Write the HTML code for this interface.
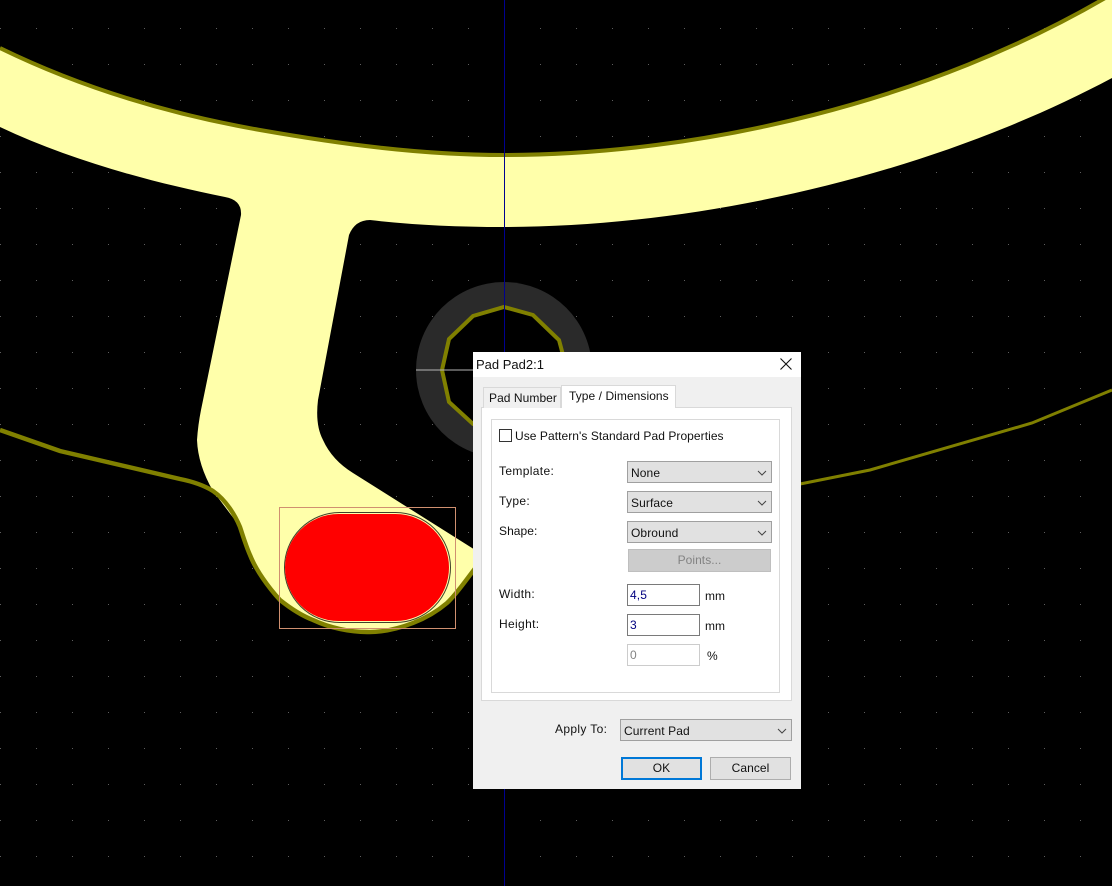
<!DOCTYPE html>
<html><head><meta charset="utf-8"><style>
html,body{margin:0;padding:0;background:#000}
#p{position:relative;width:1112px;height:886px;overflow:hidden;background:#000;font:12px "Liberation Sans",sans-serif;color:#111}
svg.bg{position:absolute;left:0;top:0}
.d{position:absolute;left:473px;top:352px;width:328px;height:437px;background:#f0f0f0}
.a{position:absolute;box-sizing:border-box;white-space:nowrap}
.t{position:absolute;white-space:nowrap;letter-spacing:.06px;line-height:14px}
.l{letter-spacing:.35px}
.c{position:absolute;box-sizing:border-box;background:#e1e1e1;border:1px solid #a0a0a0;height:22px;padding-left:3px;line-height:22px;letter-spacing:.1px}
.c svg{position:absolute;right:4px;top:8px}
.i{position:absolute;box-sizing:border-box;background:#fff;border:1px solid #7a7a7a;height:22px;width:73px;padding-left:2px;line-height:20px;color:#00007f;letter-spacing:.1px}
.b{position:absolute;box-sizing:border-box;background:#e1e1e1;border:1px solid #adadad;text-align:center;line-height:21px;letter-spacing:.05px}
</style></head><body><div id="p">
<svg class="bg" width="1112" height="886" viewBox="0 0 1112 886">
<defs><pattern id="g" x="0" y="0" width="36" height="36" patternUnits="userSpaceOnUse"><rect x="0" y="28" width="1" height="1" fill="#5e5e5e"/></pattern></defs>
<rect width="1112" height="886" fill="#000"/>
<rect width="1112" height="886" fill="url(#g)"/>
<circle cx="504" cy="370" r="88" fill="#2a2a2a"/>
<path d="M504 307L533 315L559 340L567 370L559 402L533 424L504 433L473 424L449 402L442 370L449 339L473 316Z" fill="#000" stroke="#808000" stroke-width="4"/>
<rect x="416" y="369.5" width="60" height="1" fill="#b5b5b5"/>
<path d="M0 48C90 92 180 116 260 130C340 144 420 155 504 155C700 155 930 102 1112 -6L1112 78C930 175 700 227 504 227Q430 227 370 220Q355 220 349 235L318 400Q315 425 323 440Q332 460 353 473L480 553L480 565L472 572L367 600L250 540L213 491Q198 465 197 440Q198 425 201 410L241 215Q242 200 225 197C150 182 70 160 0 127Z" fill="#ffffaa"/>
<path d="M213 491C226 500 235 515 240 527C243 536 246 546 250 555C256 570 268 587 280 600C290 608 300 615 313 620C330 628 350 632 367 632C385 632.5 400 628 413 623C426 618 437 611.5 447 603C457 594 468 577 480 562L480 560L300 510Z" fill="#ffffaa"/>
<path d="M0 48C90 92 180 116 260 130C340 144 420 155 504 155C700 155 930 102 1112 -6" fill="none" stroke="#808000" stroke-width="4"/>
<path d="M0 430Q20 437 60 451L180 479C195 482 205 486 213 491C226 500 235 515 240 527C243 536 246 546 250 555C256 570 268 587 280 600C290 608 300 615 313 620C330 628 350 632 367 632C385 632.5 400 628 413 623C426 618 437 611.5 447 603C457 594 468 577 480 562" fill="none" stroke="#808000" stroke-width="4.4"/>
<path d="M795 485L870 470L1032 423L1112 390" fill="none" stroke="#808000" stroke-width="3"/>
<rect x="504" y="0" width="1" height="886" fill="#000090"/>
<rect x="279.5" y="507.5" width="176" height="121" fill="none" stroke="#d09070"/>
<rect x="284.5" y="512.5" width="166" height="110" rx="55" fill="none" stroke="#40402a"/>
<rect x="285" y="514" width="164" height="107" rx="53.5" fill="#ff0000"/>
</svg>
<div class="d">
<div class="a" style="left:0;top:0;width:328px;height:25px;background:#fff"></div>
<div class="t" style="left:3px;top:5px;font-size:13px;letter-spacing:0;line-height:15px">Pad Pad2:1</div>
<svg class="a" style="left:307px;top:6px" width="12" height="12" viewBox="0 0 12 12"><path d="M.5.5L11.5 11.5M11.5.5L.5 11.5" stroke="#111" stroke-width="1.1" fill="none"/></svg>
<div class="a" style="left:8px;top:55px;width:311px;height:294px;background:#fff;border:1px solid #d9d9d9"></div>
<div class="a" style="left:10px;top:35px;width:78px;height:21px;background:#f0f0f0;border:1px solid #d9d9d9;border-bottom:0"></div>
<div class="t" style="left:16px;top:39px">Pad Number</div>
<div class="a" style="left:88px;top:33px;width:115px;height:23px;background:#fff;border:1px solid #d9d9d9;border-bottom:0"></div>
<div class="t" style="left:96px;top:37px">Type / Dimensions</div>
<div class="a" style="left:18px;top:67px;width:289px;height:274px;background:#fff;border:1px solid #d9d9d9"></div>
<div class="a" style="left:26px;top:77px;width:13px;height:13px;background:#fff;border:1px solid #333"></div>
<div class="t" style="left:42px;top:77px">Use Pattern's Standard Pad Properties</div>
<div class="t l" style="left:26px;top:112px">Template:</div>
<div class="t l" style="left:26px;top:142px">Type:</div>
<div class="t" style="left:26px;top:172px">Shape:</div>
<div class="c" style="left:154px;top:109px;width:145px">None<svg width="10" height="6" viewBox="0 0 10 6"><path d="M1 1L5 5L9 1" fill="none" stroke="#444"/></svg></div>
<div class="c" style="left:154px;top:139px;width:145px">Surface<svg width="10" height="6" viewBox="0 0 10 6"><path d="M1 1L5 5L9 1" fill="none" stroke="#444"/></svg></div>
<div class="c" style="left:154px;top:169px;width:145px">Obround<svg width="10" height="6" viewBox="0 0 10 6"><path d="M1 1L5 5L9 1" fill="none" stroke="#444"/></svg></div>
<div class="b" style="left:155px;top:197px;width:143px;height:23px;background:#ccc;border-color:#bfbfbf;color:#838383">Points...</div>
<div class="t l" style="left:26px;top:235px">Width:</div>
<div class="t l" style="left:26px;top:265px">Height:</div>
<div class="i" style="left:154px;top:232px">4,5</div>
<div class="i" style="left:154px;top:262px">3</div>
<div class="i" style="left:154px;top:292px;border-color:#ccc;color:#838383">0</div>
<div class="t" style="left:232px;top:237px">mm</div>
<div class="t" style="left:232px;top:267px">mm</div>
<div class="t" style="left:234px;top:297px">%</div>
<div class="t l" style="left:82px;top:370px">Apply To:</div>
<div class="c" style="left:147px;top:367px;width:172px">Current Pad<svg width="10" height="6" viewBox="0 0 10 6"><path d="M1 1L5 5L9 1" fill="none" stroke="#444"/></svg></div>
<div class="b" style="left:148px;top:405px;width:81px;height:23px;border:2px solid #0078d7;line-height:19px">OK</div>
<div class="b" style="left:237px;top:405px;width:81px;height:23px">Cancel</div>
</div>
</div></body></html>
